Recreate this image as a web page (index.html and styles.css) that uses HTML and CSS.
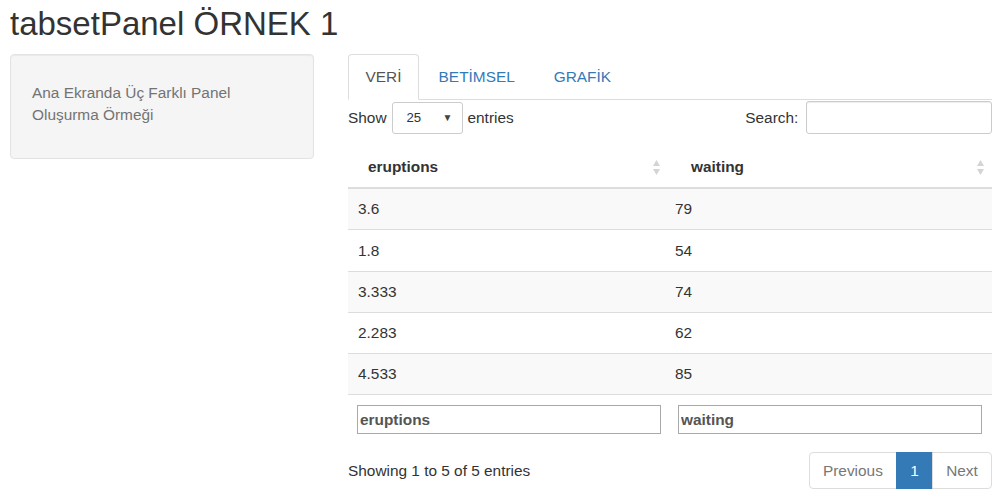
FILE: index.html
```html
<!DOCTYPE html>
<html lang="tr">
<head>
    <meta charset="UTF-8">
    <meta name="viewport" content="width=device-width, initial-scale=1.0">
    <title>tabsetPanel ÖRNEK 1</title>
    <link rel="stylesheet" href="styles.css">
</head>
<body>
<div class="page">
    <h2 class="title">tabsetPanel ÖRNEK 1</h2>

    <div class="layout">
        <div class="well">
            <p class="help-text">Ana Ekranda Üç Farklı Panel Oluşurma Örmeği</p>
        </div>

        <div class="main">
            <ul class="nav-tabs">
                <li class="active"><a href="#veri">VERİ</a></li>
                <li><a href="#betimsel">BETİMSEL</a></li>
                <li><a href="#grafik">GRAFİK</a></li>
            </ul>

            <div class="tab-pane">
                <div class="dt-top">
                    <div class="dt-length">
                        Show
                        <span class="select-box"><span>25</span><span class="caret">&#9660;</span></span>
                        entries
                    </div>
                    <div class="dt-filter">
                        Search:<input type="text" class="search-input">
                    </div>
                </div>

                <table class="dt">
                    <colgroup>
                        <col class="col-a">
                        <col class="col-b">
                    </colgroup>
                    <thead>
                        <tr>
                            <th>
                                <div class="th-inner">
                                    <span>eruptions</span>
                                    <svg class="sort" width="7" height="15" viewBox="0 0 7 15"><polygon points="3.5,0 7,6 0,6"/><polygon points="0,9 7,9 3.5,15"/></svg>
                                </div>
                            </th>
                            <th>
                                <div class="th-inner">
                                    <span>waiting</span>
                                    <svg class="sort" width="7" height="15" viewBox="0 0 7 15"><polygon points="3.5,0 7,6 0,6"/><polygon points="0,9 7,9 3.5,15"/></svg>
                                </div>
                            </th>
                        </tr>
                    </thead>
                    <tbody>
                        <tr class="odd"><td>3.6</td><td>79</td></tr>
                        <tr><td>1.8</td><td>54</td></tr>
                        <tr class="odd"><td>3.333</td><td>74</td></tr>
                        <tr><td>2.283</td><td>62</td></tr>
                        <tr class="odd"><td>4.533</td><td>85</td></tr>
                    </tbody>
                    <tfoot>
                        <tr>
                            <td><input type="text" class="col-filter" value="eruptions"></td>
                            <td><input type="text" class="col-filter" value="waiting"></td>
                        </tr>
                    </tfoot>
                </table>

                <div class="dt-bottom">
                    <div class="dt-info">Showing 1 to 5 of 5 entries</div>
                    <ul class="pagination">
                        <li class="disabled"><a href="#">Previous</a></li>
                        <li class="active"><a href="#">1</a></li>
                        <li class="disabled"><a href="#">Next</a></li>
                    </ul>
                </div>
            </div>
        </div>
    </div>
</div>
</body>
</html>
```

FILE: styles.css
```css
body {
    margin: 0;
    font-family: "Liberation Sans", Arial, sans-serif;
    font-size: 15.4px;
    line-height: 22px;
    color: #333;
    background: #fff;
}
a {
    color: #337ab7;
    text-decoration: none;
}
.page {
    padding: 0 8px 0 10px;
}
.title {
    margin: 6px 0 12px;
    font-size: 33px;
    font-weight: 500;
    line-height: 1.1;
    color: #333;
}
.layout {
    display: flex;
    gap: 34px;
    align-items: flex-start;
}
.well {
    width: 304px;
    box-sizing: border-box;
    padding: 21px;
    background-color: #f5f5f5;
    border: 1px solid #e3e3e3;
    border-radius: 4px;
    box-shadow: inset 0 1px 1px rgba(0, 0, 0, 0.05);
}
.help-text {
    margin: 5.5px 0 11px;
    color: #737373;
}
.main {
    width: 644px;
}

/* tabs */
.nav-tabs {
    display: flex;
    margin: 0;
    padding: 0;
    list-style: none;
    border-bottom: 1px solid #ddd;
}
.nav-tabs li {
    margin-bottom: -1px;
}
.nav-tabs a {
    display: block;
    margin-right: 2.2px;
    padding: 11px 16.5px;
    line-height: 22px;
    border: 1px solid transparent;
    border-radius: 4px 4px 0 0;
}
.nav-tabs li:nth-child(2) a {
    margin-right: 4px;
}
.nav-tabs .active a {
    color: #555;
    background: #fff;
    border-color: #ddd #ddd transparent;
}

/* datatable controls */
.dt-top {
    display: flex;
    justify-content: space-between;
    align-items: center;
    height: 33px;
    margin-top: 1px;
}
.dt-length {
    display: flex;
    align-items: center;
    gap: 5px;
}
.select-box {
    display: flex;
    align-items: center;
    justify-content: space-between;
    width: 71px;
    height: 32px;
    box-sizing: border-box;
    padding: 0 9px 0 14px;
    font-size: 13.2px;
    border: 1px solid #ccc;
    border-radius: 3px;
}
.caret {
    font-size: 10px;
    color: #444;
}
.dt-filter {
    display: flex;
    align-items: center;
}
.search-input {
    width: 186px;
    height: 33px;
    box-sizing: border-box;
    margin-left: 7.7px;
    padding: 5px 10px;
    border: 1px solid #ccc;
    border-radius: 3px;
    box-shadow: inset 0 1px 1px rgba(0, 0, 0, 0.075);
    font-family: inherit;
    font-size: 13.2px;
}

/* table */
.dt {
    width: 644px;
    margin-top: 9px;
    table-layout: fixed;
    border-collapse: separate;
    border-spacing: 0;
}
.col-a {
    width: 320px;
}
.col-b {
    width: 324px;
}
.dt th {
    padding: 13px 8px 9px 20px;
    text-align: left;
    font-weight: bold;
    border-bottom: 2px solid #ddd;
}
.dt th + th {
    padding-left: 23px;
}
.th-inner {
    display: flex;
    justify-content: space-between;
    align-items: center;
}
.sort {
    fill: #d4d4d4;
}
.dt tbody td {
    padding: 9.1px 10px;
    border-bottom: 1px solid #ddd;
}
.dt tbody td + td {
    padding-left: 7px;
}
.dt tbody tr.odd td {
    background-color: #f9f9f9;
}
.dt tfoot td {
    padding: 10px 7px 10px 9px;
}
.dt tfoot td + td {
    padding: 10px 10px;
}
.col-filter {
    display: block;
    width: 100%;
    height: 29px;
    box-sizing: border-box;
    margin: 0;
    padding: 0 2px;
    border: 1px solid #a9a9a9;
    font-family: inherit;
    font-size: 15.4px;
    font-weight: bold;
    color: #555;
}

/* info + paging */
.dt-bottom {
    display: flex;
    justify-content: space-between;
    align-items: center;
    margin-top: 8px;
}
.pagination {
    display: flex;
    margin: 0;
    padding: 0;
    list-style: none;
}
.pagination a {
    display: block;
    padding: 6.6px 13.2px;
    line-height: 22px;
    border: 1px solid #ddd;
    margin-left: -1px;
    background: #fff;
}
.pagination li:first-child a {
    margin-left: 0;
    border-radius: 4px 0 0 4px;
}
.pagination li:last-child a {
    border-radius: 0 4px 4px 0;
}
.pagination .disabled a {
    color: #777;
}
.pagination .active a {
    color: #fff;
    background-color: #337ab7;
    border-color: #337ab7;
}
```
